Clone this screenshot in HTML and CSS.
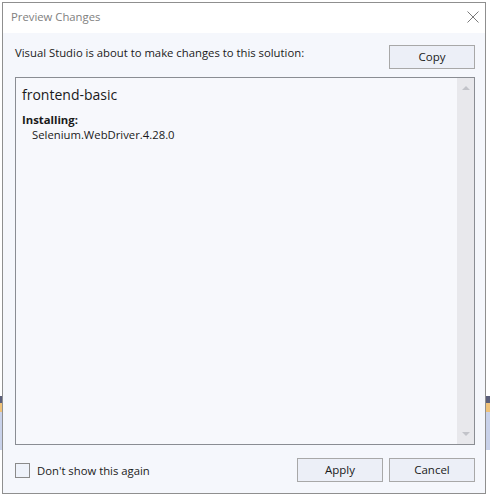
FILE: index.html
```html
<!DOCTYPE html>
<html>
<head>
<meta charset="utf-8">
<link rel="stylesheet" href="styles.css">
</head>
<body>
<div class="dialog">
  <div class="titlebar">
    <span class="title">Preview Changes</span>
    <svg class="close" width="12" height="12" viewBox="0 0 12 12"><path d="M0.5 0.5 L11.5 11.5 M11.5 0.5 L0.5 11.5" stroke="#7a7a7a" stroke-width="1" fill="none"/></svg>
  </div>
  <div class="content">
    <div class="header">
      <span class="intro">Visual Studio is about to make changes to this solution:</span>
      <button class="btn">Copy</button>
    </div>
    <div class="listbox">
      <div class="list-text">
        <div class="project">frontend-basic</div>
        <div class="section">Installing:</div>
        <div class="item">Selenium.WebDriver.4.28.0</div>
      </div>
      <div class="scrollbar">
        <span class="arrow up"></span>
        <span class="arrow down"></span>
      </div>
    </div>
    <div class="footer">
      <label class="check"><span class="box"></span><span>Don't show this again</span></label>
      <div class="buttons">
        <button class="btn">Apply</button>
        <button class="btn">Cancel</button>
      </div>
    </div>
  </div>
</div>
</body>
</html>
```
FILE: styles.css
```css
html, body {
  margin: 0;
  padding: 0;
}
body {
  width: 490px;
  height: 495px;
  overflow: hidden;
  background: linear-gradient(to bottom, #ffffff 0 396px, #5b5f7a 396px 403px, #efc27a 403px 412px, #c9d2ea 412px 450px, #ffffff 450px);
  font-family: "Open Sans", "Noto Sans", sans-serif;
  font-size: 11.3px;
  color: #1a1a1a;
}
.dialog {
  margin: 2px;
  width: 484px;
  height: 492px;
  box-sizing: border-box;
  border: 1px solid #8f8f8f;
  background: #f5f7fc;
  display: flex;
  flex-direction: column;
}
.titlebar {
  height: 30px;
  flex: none;
  background: #ffffff;
  display: flex;
  align-items: center;
  justify-content: space-between;
  padding: 0 6px 0 8px;
}
.title {
  color: #808080;
  font-size: 11.3px;
  margin-top: -3px;
}
.close {
  margin-top: -2px;
}
.content {
  flex: 1;
  display: flex;
  flex-direction: column;
  padding: 12px 10px 10px 12px;
}
.header {
  display: flex;
  justify-content: space-between;
  align-items: flex-start;
  height: 24px;
}
.intro {
  margin-top: 0;
}
.btn {
  width: 86px;
  height: 24px;
  box-sizing: border-box;
  border: 1px solid #a8a8a8;
  background: #eceff7;
  font-family: inherit;
  font-size: 11.5px;
  color: #1a1a1a;
  padding: 0;
  line-height: 20px;
}
.listbox {
  margin-top: 8px;
  height: 368px;
  box-sizing: border-box;
  border: 1px solid #8a8d93;
  background: #f7f8fc;
  display: flex;
}
.list-text {
  flex: 1;
  padding: 8px 6px;
}
.project {
  font-size: 14px;
  line-height: 20px;
  margin-top: -1px;
}
.section {
  font-weight: bold;
  margin-top: 7px;
  line-height: 15px;
}
.item {
  padding-left: 10px;
  line-height: 15px;
}
.scrollbar {
  width: 17px;
  background: #e8e8ec;
  display: flex;
  flex-direction: column;
  justify-content: space-between;
  align-items: center;
  padding: 8px 0;
  box-sizing: border-box;
}
.arrow {
  width: 0;
  height: 0;
  border-left: 4px solid transparent;
  border-right: 4px solid transparent;
}
.arrow.up {
  border-bottom: 4px solid #c2c3c9;
}
.arrow.down {
  border-top: 4px solid #c2c3c9;
}
.footer {
  margin-top: 13px;
  display: flex;
  justify-content: space-between;
  align-items: center;
}
.check {
  display: flex;
  align-items: center;
  gap: 7px;
}
.box {
  width: 15px;
  height: 15px;
  box-sizing: border-box;
  border: 1px solid #8a8a8a;
  background: #eef2fa;
}
.buttons {
  display: flex;
  gap: 6px;
}
```
